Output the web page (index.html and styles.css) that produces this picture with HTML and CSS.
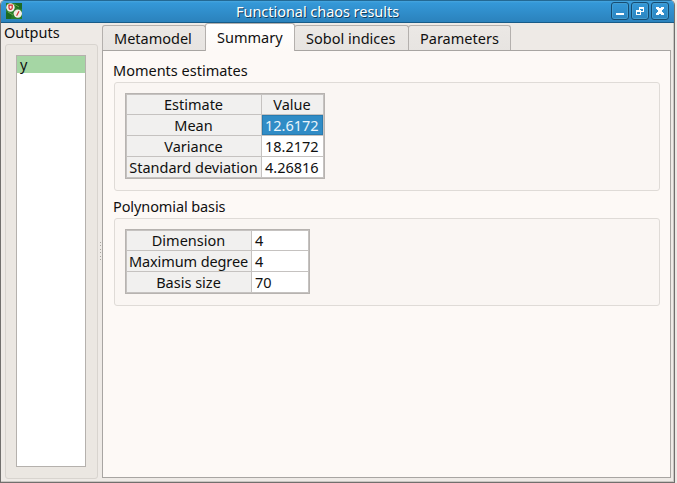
FILE: index.html
```html
<!DOCTYPE html>
<html lang="en">
<head>
<meta charset="utf-8">
<title>Functional chaos results</title>
<link rel="stylesheet" href="styles.css">
</head>
<body>
<div class="window">
  <header class="titlebar">
    <svg class="app-icon" width="16" height="16" viewBox="0 0 16 16">
      <rect width="16" height="16" fill="#287d2b"/>
      <path d="M8 0h8v6l-5-1zM0 9l6 2-1 5H0z" fill="#1d6a22"/>
      <path d="M2 9l5 3M8 1l5 3" stroke="#65a847" stroke-width="1"/>
      <circle cx="4.5" cy="4.5" r="4.2" fill="#f3eee6"/>
      <path d="M3 2.2v2.6a1.6 1.6 0 0 0 3.2 0V2.2z" fill="none" stroke="#d32325" stroke-width="1.2"/>
      <circle cx="11.8" cy="10.6" r="4.2" fill="#f3eee6"/>
      <path d="M10.6 12.8l2.4-4.6" stroke="#d33a35" stroke-width="1.2"/>
    </svg>
    <h1 class="title">Functional chaos results</h1>
    <div class="controls">
      <span class="control"><svg width="16" height="16" viewBox="0 0 16 16"><path d="M4 10h8v2H4z"/></svg></span>
      <span class="control"><svg width="16" height="16" viewBox="0 0 16 16"><path fill-rule="evenodd" d="M7 4h5v5H9v3H4V7h3zM8 6v1h1v1h2V6zM5 9v2h3V9z"/></svg></span>
      <span class="control"><svg width="16" height="16" viewBox="0 0 16 16"><path d="M4 4h3v1h2V4h3v2h-1v1h-1v2h1v1h1v2H9v-1H7v1H4v-2h1V9h1V7H5V6H4z"/></svg></span>
    </div>
  </header>
  <main class="content">
    <section class="outputs">
      <h2 class="label">Outputs</h2>
      <div class="group outputs-group">
        <ul class="list"><li class="selected">y</li></ul>
      </div>
    </section>
    <div class="splitter"><i></i><i></i><i></i><i></i><i></i><i></i></div>
    <section class="tabs">
      <nav class="tabbar">
        <span class="tab tab-metamodel">Metamodel</span>
        <span class="tab tab-summary active">Summary</span>
        <span class="tab tab-sobol">Sobol indices</span>
        <span class="tab tab-parameters">Parameters</span>
      </nav>
      <div class="pane">
        <h2 class="label">Moments estimates</h2>
        <div class="group moments">
          <div class="grid moments-grid">
            <span class="head">Estimate</span><span class="head">Value</span>
            <span class="head">Mean</span><span class="current">12.6172</span>
            <span class="head">Variance</span><span>18.2172</span>
            <span class="head">Standard deviation</span><span>4.26816</span>
          </div>
        </div>
        <h2 class="label basis-label">Polynomial basis</h2>
        <div class="group basis">
          <div class="grid basis-grid">
            <span class="head">Dimension</span><span>4</span>
            <span class="head wide">Maximum degree</span><span>4</span>
            <span class="head">Basis size</span><span>70</span>
          </div>
        </div>
      </div>
    </section>
  </main>
</div>
</body>
</html>
```
FILE: styles.css
```css
* { box-sizing: border-box; }
body { margin: 0; width: 677px; height: 483px; overflow: hidden; background: #ece9e5; color: #101010; font: 14.5px/20px "Noto Sans", sans-serif; }
h1, h2, ul { margin: 0; padding: 0; font-size: inherit; font-weight: normal; list-style: none; }
.window { width: 675px; height: 483px; border: 1px solid #716f6d; border-top: 0; border-radius: 5px 5px 0 0; background: #eeeae6; box-shadow: inset -1px -1px #c9c6c2; overflow: hidden; display: flex; flex-direction: column; }
.titlebar { height: 23px; flex: none; background: linear-gradient(#46a5df 0, #3498d8 2px, #2b82bc 100%); border-top: 1px solid #236994; border-bottom: 1px solid #185b87; display: flex; align-items: flex-start; padding: 1px 5px 0 5px; }
.app-icon { margin-top: 1px; }
.title { flex: 1; padding-left: 214px; color: #fff; text-shadow: 1px 1px #123e5b; line-height: 18px; letter-spacing: -.04px; }
.controls { display: flex; gap: 2px; }
.control { width: 18px; height: 18px; border: 1px solid #174c71; border-radius: 3px; box-shadow: inset 0 0 0 1px #429dd1; }
.control svg { display: block; fill: #fff; }
.content { flex: 1; display: flex; padding: 0 3px 4px 4px; }
.outputs { width: 93px; display: flex; flex-direction: column; }
.label { height: 20px; line-height: 16px; white-space: nowrap; }
.outputs .label { height: 21px; line-height: 18px; margin-left: -1px; }
.basis-label { letter-spacing: -.1px; }
.group { border: 1px solid #dfdbd7; border-radius: 3px; background: #faf6f3; }
.outputs-group { flex: 1; background: #ebe7e2; border-color: #d8d4cf; padding: 10px 11px 11px 10px; }
.list { height: 412px; border: 1px solid #b5b1ad; background: #fff; }
.selected { height: 17px; line-height: 16px; background: #a5d6a4; padding-left: 3px; }
.splitter { width: 4px; padding-left: 2px; display: flex; flex-direction: column; justify-content: center; gap: 2.5px; }
.splitter i { width: 1px; height: 1px; background: #aaa6a1; }
.tabs { width: 569px; display: flex; flex-direction: column; }
.tabbar { height: 27px; display: flex; align-items: flex-end; position: relative; z-index: 1; }
.tab { height: 25px; border: 1px solid #b4b0ad; border-bottom: 0; background: linear-gradient(#ebe8e5, #e7e4e1); border-radius: 3px 3px 0 0; padding-left: 11px; line-height: 24px; margin-right: -1px; white-space: nowrap; }
.tab.active { height: 28px; margin-bottom: -1px; line-height: 26px; background: linear-gradient(#fff, #fdf9f6); z-index: 1; }
.tab-metamodel { width: 104px; }
.tab-summary { width: 90px; }
.tab-sobol { width: 115px; }
.tab-parameters { width: 103px; }
.pane { height: 428px; border: 1px solid #a8a5a2; background: #fdf9f6; padding: 11px 10px 0 10px; }
.pane .group { margin-left: 1px; padding: 10px; }
.moments { height: 109px; margin-bottom: 7px; }
.basis { height: 88px; }
.grid { display: grid; gap: 1px; background: #c5c2c0; border: 1px solid #b7b3b0; padding: 1px; line-height: 20px; }
.grid span { background: #fff; padding-left: 3px; white-space: nowrap; overflow: hidden; display: flex; }
.grid span:nth-child(-n+2) { line-height: 18px; }
.grid .head { background: #f1f0ef; padding: 0 1px 0 0; justify-content: center; }
.grid .wide { letter-spacing: -.1px; }
.grid .current { background: #308cc6; box-shadow: inset 0 0 0 1px #287bb0; color: #e9f4fb; }
.moments-grid { width: 200px; height: 86px; grid-template-columns: 134px 1fr; grid-template-rows: 19px repeat(3, 20px); }
.basis-grid { width: 185px; height: 65px; grid-template-columns: 124px 1fr; grid-template-rows: 19px repeat(2, 20px); }
```
